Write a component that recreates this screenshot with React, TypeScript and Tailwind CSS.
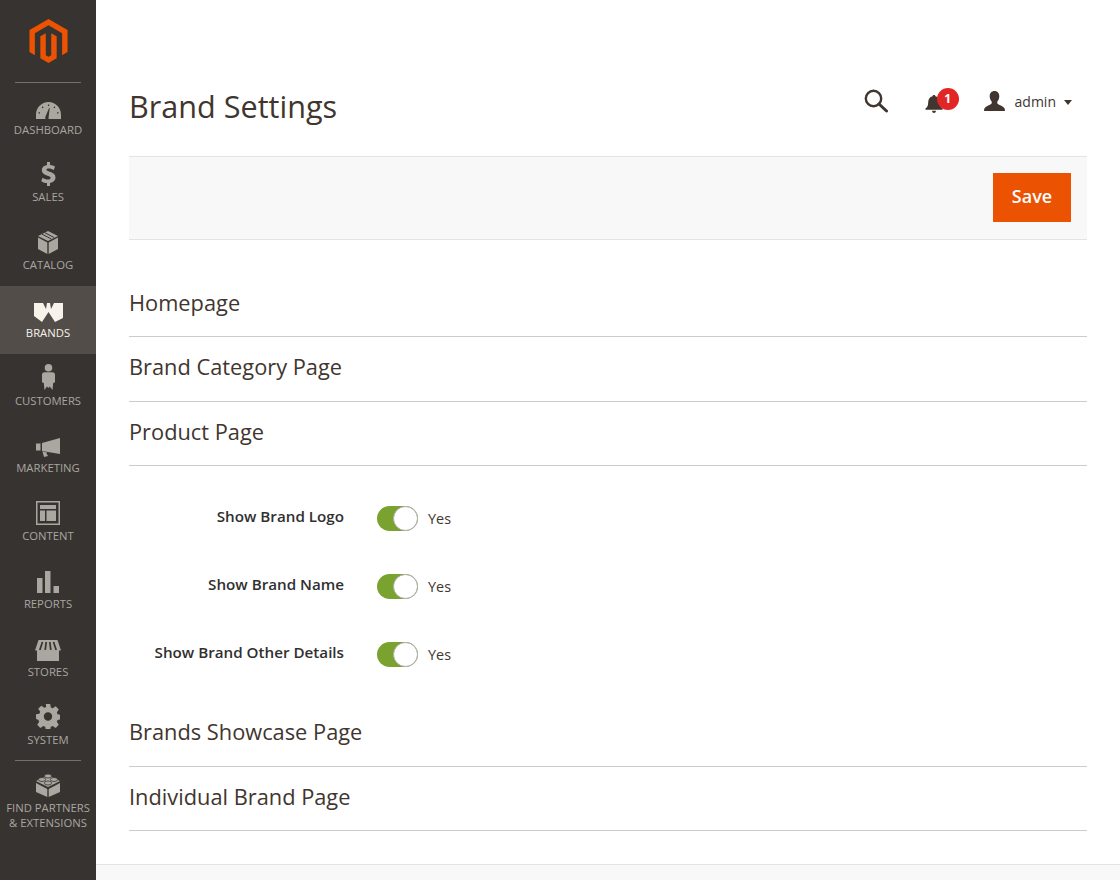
import type { ReactNode } from 'react'

interface NavItem {
  label: string
  active?: boolean
  icon: ReactNode
}

const navItems: NavItem[] = [
  {
    label: 'Dashboard',
    icon: (
      <svg width="25" height="17" viewBox="0 0 25 17" fill="currentColor">
        <path fillRule="evenodd" d="M12.5 0C5.6 0 0 5.6 0 12.5V17h9.6c-.3-.6-.4-1.200-.3-1.900l3.800-9.100.6.200-1.200 9.700c-.1.400.1.800.3 1.100H25v-4.500C25 5.600 19.400 0 12.500 0zM4 11.500H2.500v-1.300H4v1.300zm2.700-5.200L5.600 5.200l.9-.9 1.100 1.100-.9.900zM13.200 4h-1.300V2.500h1.300V4zm5.100 2.300-.9-.9 1.100-1.100.9.900-1.100 1.100zm4.200 5.200H21v-1.300h1.500v1.300z" />
      </svg>
    ),
  },
  {
    label: 'Sales',
    icon: (
      <svg width="15" height="24" viewBox="0 0 15 24" fill="currentColor">
        <path d="M6 0h3v3c2 .2 3.700.8 5 1.600l-1.200 3.300c-1.500-.9-3.200-1.500-5-1.500-1.500 0-2.300.5-2.300 1.300 0 .9.900 1.300 3.300 2.100 3.700 1.200 5.700 2.700 5.700 5.700 0 2.900-2 4.900-5.500 5.400V24H6v-2.900c-2.300-.2-4.300-.9-5.700-1.900l1.200-3.400c1.600 1.100 3.600 1.800 5.600 1.800 1.600 0 2.600-.6 2.600-1.500 0-1-.9-1.500-3.200-2.300C2.800 12.600.8 11.200.8 8.100.8 5.500 2.700 3.600 6 3.100V0z" />
      </svg>
    ),
  },
  {
    label: 'Catalog',
    icon: (
      <svg width="20" height="23" viewBox="0 0 20 23" fill="currentColor">
        <path d="M10 0l10 5-10 5L0 5l10-5zM0 6.500l9.300 5V23L0 18V6.500zM20 6.500V18l-9.300 5V11.500L20 6.500z" />
        <path d="M6.500 1.500l9.500 5M3.800 3l9.500 5" stroke="#373330" strokeWidth="1" fill="none" />
      </svg>
    ),
  },
  {
    label: 'Brands',
    active: true,
    icon: (
      <svg width="29" height="19" viewBox="0 0 29 19" fill="currentColor">
        <path d="M0 0h29v15l-8 4-6.500-10L8 19l-8-6V0z" />
        <path d="M9 0h4l-1 6-3-6zM16 0h4l-3 6-1-6z" fill="#524d49" />
      </svg>
    ),
  },
  {
    label: 'Customers',
    icon: (
      <svg width="13" height="26" viewBox="0 0 13 26" fill="currentColor">
        <path d="M6.500 0a3.800 3.800 0 0 1 3.800 3.800 3.800 3.800 0 0 1-3.800 3.800 3.800 3.800 0 0 1-3.800-3.800A3.800 3.800 0 0 1 6.500 0zM2.500 8.300h8c1.500 0 2.500 1 2.500 2.500v7.400l-1.800.7-.7 7-2.800-3.500L6.500 24 5 22.400 2.500 26l-.7-7L0 18.200v-7.400c0-1.500 1-2.500 2.500-2.500z" />
      </svg>
    ),
  },
  {
    label: 'Marketing',
    icon: (
      <svg width="24" height="19" viewBox="0 0 24 19" fill="currentColor">
        <path d="M6 5L24 0v16L6 13V5zM0 5.500h4.500v7H0v-7zM6.500 13.500l4.500 1-.5 1 1.500 2.500-4 1-1.500-5.500z" />
      </svg>
    ),
  },
  {
    label: 'Content',
    icon: (
      <svg width="24" height="24" viewBox="0 0 24 24" fill="currentColor">
        <path fillRule="evenodd" d="M0 0h24v24H0V0zm1.500 1.500v21h21v-21h-21zM4 4h16v4H4V4zm0 5.500h5V20H4V9.500zm6.500 0H20V20h-9.500V9.500z" />
      </svg>
    ),
  },
  {
    label: 'Reports',
    icon: (
      <svg width="22" height="22" viewBox="0 0 22 22" fill="currentColor">
        <path d="M0 7h5.500v15H0V7zM8 0h5.500v22H8V0zM16.500 15H22v7h-5.500v-7z" />
      </svg>
    ),
  },
  {
    label: 'Stores',
    icon: (
      <svg width="26" height="21" viewBox="0 0 26 21" fill="currentColor">
        <path d="M3.500 0h19L26 10.500H0L3.500 0zM2 10.500h22V21H2V10.500z" />
        <path d="M7.500 2L4.800 10M11.200 2L10.200 10M14.800 2L15.800 10M18.500 2L21.200 10" stroke="#373330" strokeWidth="1.700" fill="none" />
      </svg>
    ),
  },
  {
    label: 'System',
    icon: (
      <svg width="24" height="25" viewBox="0 0 24 25" fill="currentColor">
        <path fillRule="evenodd" d="M9.800 0h4.400l.6 3.500 1.900.8 3-2 3.100 3.100-2 3 .8 1.900 3.400.6v4.400l-3.400.6-.8 1.900 2 3-3.100 3.100-3-2-1.900.8-.6 3.500H9.800l-.6-3.500-1.900-.8-3 2-3.100-3.100 2-3-.8-1.900L0 14.700v-4.400l3.400-.6.800-1.900-2-3 3.100-3.100 3 2 1.900-.8L9.800 0zM12 8.300a4.200 4.200 0 1 0 0 8.400 4.200 4.200 0 0 0 0-8.400z" />
      </svg>
    ),
  },
]

function NavEntry({ item }: { item: NavItem }) {
  return (
    <div
      className={
        item.active
          ? 'h-[67.8px] flex flex-col items-center bg-[#524d49] text-[#f7f3eb]'
          : 'h-[67.8px] flex flex-col items-center text-[#aaa6a0]'
      }
    >
      <div className="h-[36px] flex items-end justify-center">{item.icon}</div>
      <span className="text-[11.300px] leading-[14px] mt-[4px] uppercase">{item.label}</span>
    </div>
  )
}

function Sidebar() {
  return (
    <aside className="w-[96px] shrink-0 bg-[#373330] flex flex-col">
      <div className="h-[82.500px] flex flex-col items-center">
        <svg className="mt-[19px] text-[#eb5202]" width="39" height="44" viewBox="1.600 0 20.800 24" fill="currentColor">
          <path d="M12 24l-4.455-2.572v-12l2.970-1.715v12.001L12 20.570l1.485-.856V7.713l2.970 1.715v12L12 24zM22.391 6v12l-2.969 1.714V7.713L12 3.430 4.574 7.713v12.001L1.609 18V6L12 0l10.391 6z" />
        </svg>
      </div>
      <nav className="relative">
        <div className="absolute top-[-1px] left-[15px] right-[15px] h-px bg-[#736f6a]" />
        {navItems.map((item) => (
          <NavEntry key={item.label} item={item} />
        ))}
      </nav>
      <div className="mx-[15px] h-px bg-[#736f6a]" />
      <div className="flex flex-col items-center text-[#aaa6a0] pt-[12px]">
        <svg width="24" height="24" viewBox="0 0 24 24" fill="currentColor">
          <path d="M12 2l12 6-12 6L0 8l12-6zM0 10l11.300 6v8L0 19v-9zM24 10v9l-11.300 5v-8L24 10z" />
          <g stroke="#373330" strokeWidth="0.800">
            <ellipse cx="12" cy="3" rx="3.600" ry="2" />
            <ellipse cx="6" cy="6.500" rx="3.600" ry="2" />
            <ellipse cx="18" cy="6.500" rx="3.600" ry="2" />
            <ellipse cx="12" cy="10" rx="3.600" ry="2" />
          </g>
        </svg>
        <span className="text-[11.300px] leading-[15px] mt-[3px] uppercase text-center whitespace-nowrap">
          Find Partners
          <br />& Extensions
        </span>
      </div>
    </aside>
  )
}

function TopActions() {
  return (
    <div className="flex items-center mb-[12px] mr-[15px] text-[#41362f]">
      <svg width="24" height="24" viewBox="0 0 24 24" fill="none" stroke="currentColor" className="mr-[37px]">
        <circle cx="9.500" cy="9.500" r="7.700" strokeWidth="2.400" />
        <path d="M15 15l7.500 7" strokeWidth="3" strokeLinecap="round" />
      </svg>
      <div className="relative w-[20px] h-[20px] mt-[8px] mr-[39px]">
        <svg width="18" height="18" viewBox="0 0 20 20" fill="currentColor">
          <path d="M10 0c1 0 1.500.6 1.600 1.400C15 2.200 16.500 5 16.500 8.500c0 3.200 1 5.200 3 6.500v1.500H.5V15c2-1.300 3-3.300 3-6.500C3.500 5 5 2.200 8.400 1.400 8.500.6 9 0 10 0zM7.800 17.500h4.400C12 19 11.200 20 10 20s-2-1-2.200-2.500z" />
        </svg>
        <span className="absolute left-[12px] top-[-7.500px] w-[22px] h-[22px] rounded-full bg-[#e22626] text-white text-[12px] font-bold flex items-center justify-center">
          1
        </span>
      </div>
      <svg width="21" height="20" viewBox="0 0 21 20" fill="currentColor" className="mr-[10px]">
        <path d="M10.500 0c3 0 4.800 2.200 4.800 5.200 0 2-.8 4-2 5.200v1.800c0 1 3.200 2 5.200 3.200 1.500.8 2.500 1.600 2.500 4.600H0c0-3 1-3.800 2.500-4.600 2-1.200 5.200-2.200 5.200-3.200v-1.800c-1.200-1.200-2-3.200-2-5.200C5.700 2.200 7.500 0 10.500 0z" />
      </svg>
      <span className="text-[14px] text-[#41362f]">admin</span>
      <span className="ml-[8px] mt-[2px] w-0 h-0 border-x-[4.500px] border-x-transparent border-t-[5px] border-t-[#41362f]" />
    </div>
  )
}

function SectionHeading({ title }: { title: string }) {
  return (
    <div className="h-[64.500px] border-b border-[#cccccc] flex items-center pb-[2px] text-[21.800px] text-[#41362f]">
      {title}
    </div>
  )
}

function ToggleRow({ label }: { label: string }) {
  return (
    <div className="h-[68px] flex items-center">
      <label className="w-[215px] text-right text-[15.200px] font-semibold text-[#303030] mb-[4px]">{label}</label>
      <div className="ml-[33px] w-[41px] h-[25px] rounded-full bg-[#79a22e] relative">
        <span className="absolute right-0 top-0 w-[25px] h-[25px] rounded-full bg-white border border-[#adadad]" />
      </div>
      <span className="ml-[10px] text-[14.400px] text-[#41362f]">Yes</span>
    </div>
  )
}

export default function App() {
  return (
    <div className="w-[1120px] h-[880px] overflow-hidden flex bg-white font-['Open_Sans',sans-serif]">
      <Sidebar />
      <div className="flex-1 flex flex-col">
        <main className="flex-1 px-[33px]">
          <header className="h-[156px] pt-[58px] flex items-center justify-between">
            <h1 className="text-[30.600px] text-[#41362f]">Brand Settings</h1>
            <TopActions />
          </header>
          <div className="h-[84px] bg-[#f8f8f8] border-y border-[#e3e3e3] flex items-center justify-end pr-[16px] pb-[2px]">
            <button className="w-[78px] h-[49px] pb-[2px] bg-[#eb5202] text-white text-[18px] font-semibold">Save</button>
          </div>
          <div className="mt-[32.500px]">
            <SectionHeading title="Homepage" />
            <SectionHeading title="Brand Category Page" />
            <SectionHeading title="Product Page" />
            <div className="pt-[18.500px] pb-[13.500px]">
              <ToggleRow label="Show Brand Logo" />
              <ToggleRow label="Show Brand Name" />
              <ToggleRow label="Show Brand Other Details" />
            </div>
            <SectionHeading title="Brands Showcase Page" />
            <SectionHeading title="Individual Brand Page" />
          </div>
        </main>
        <footer className="h-[16px] bg-[#f8f8f8] border-t border-[#e3e3e3]" />
      </div>
    </div>
  )
}
